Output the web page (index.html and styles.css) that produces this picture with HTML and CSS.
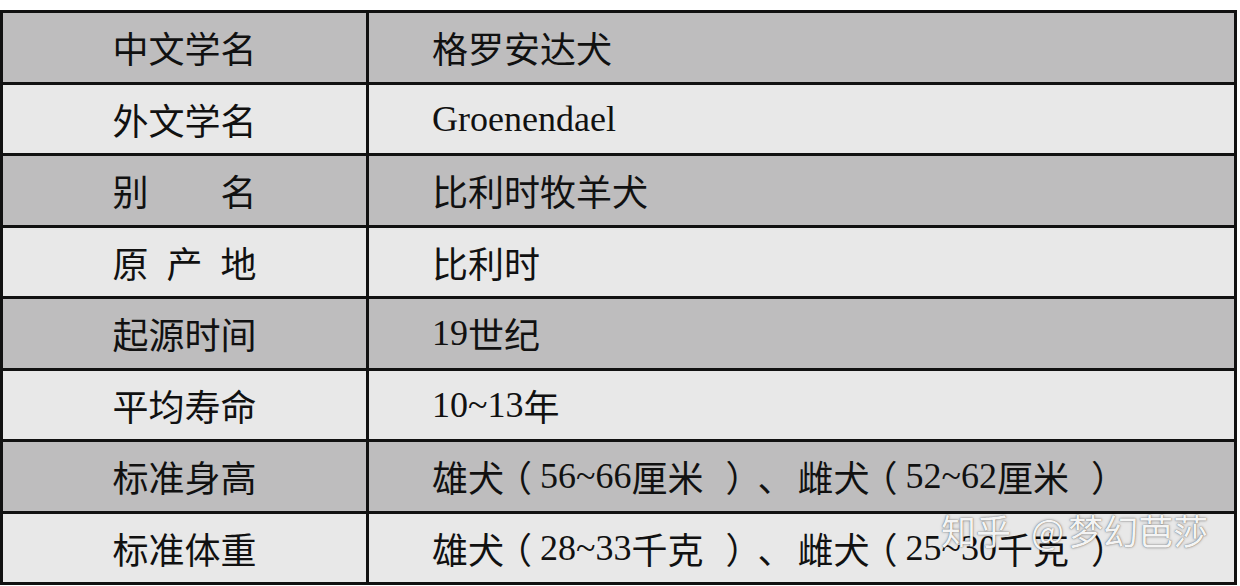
FILE: index.html
```html
<!DOCTYPE html>
<html lang="zh-CN">
<head>
<meta charset="utf-8">
<title>格罗安达犬</title>
<link rel="stylesheet" href="styles.css">
</head>
<body>
<div class="sheet">
  <div class="row dark"><div class="k"><span class="lbl">中文学名</span></div><div class="v">格罗安达犬</div></div>
  <div class="row light"><div class="k"><span class="lbl">外文学名</span></div><div class="v"><span class="n">Groenendael</span></div></div>
  <div class="row dark"><div class="k"><span class="lbl">别 名</span></div><div class="v">比利时牧羊犬</div></div>
  <div class="row light"><div class="k"><span class="lbl">原 产 地</span></div><div class="v">比利时</div></div>
  <div class="row dark"><div class="k"><span class="lbl">起源时间</span></div><div class="v"><span class="n">19</span>世纪</div></div>
  <div class="row light"><div class="k"><span class="lbl">平均寿命</span></div><div class="v"><span class="n">10~13</span>年</div></div>
  <div class="row dark"><div class="k"><span class="lbl">标准身高</span></div><div class="v">雄犬<span class="po">（</span><span class="n">56~66</span>厘米<span class="pc">）</span><span class="dn">、</span>雌犬<span class="po">（</span><span class="n">52~62</span>厘米<span class="pc">）</span></div></div>
  <div class="row light"><div class="k"><span class="lbl">标准体重</span></div><div class="v">雄犬<span class="po">（</span><span class="n">28~33</span>千克<span class="pc">）</span><span class="dn">、</span>雌犬<span class="po">（</span><span class="n">25~30</span>千克<span class="pc">）</span></div></div>
</div>
<div class="wm"><span class="wm-a">知乎</span><span class="wm-at">@</span><span>梦幻芭莎</span></div>
</body>
</html>
```
FILE: styles.css
```css
html, body {
  margin: 0;
  padding: 0;
  background: #ffffff;
}
body {
  width: 1240px;
  height: 586px;
  overflow: hidden;
  position: relative;
  padding-top: 10px;
  box-sizing: border-box;
}
.sheet {
  width: 1237px;
  box-sizing: border-box;
  background: #111111;
  padding: 3px;
  display: flex;
  flex-direction: column;
  gap: 3px;
}
.row {
  display: grid;
  grid-template-columns: 363px 1fr;
  column-gap: 3px;
  height: 68.5px;
}
.row.dark .k, .row.dark .v { background: #bebdbe; }
.row.light .k, .row.light .v { background: #e8e8e8; }
.k {
  display: flex;
  align-items: center;
  justify-content: center;
  font-family: "Noto Sans CJK SC", sans-serif;
  font-weight: 400;
  font-size: 36px;
  color: #111;
}
.lbl {
  display: block;
  width: 144px;
  line-height: 36px;
  text-align: justify;
  text-align-last: justify;
  white-space: nowrap;
}
.v {
  display: flex;
  align-items: center;
  padding-left: 63px;
  font-family: "Noto Sans CJK SC", sans-serif;
  font-weight: 400;
  font-size: 36px;
  color: #111;
  white-space: pre;
}
.n {
  font-family: "Liberation Serif", serif;
  font-weight: 400;
}
.po {
  margin-left: -8px;
  margin-right: 8px;
}
.pc {
  margin-left: 22px;
  margin-right: -4px;
}
.dn {
  margin-right: 4px;
}
.wm {
  position: absolute;
  left: 941px;
  top: 512px;
  display: flex;
  font-family: "Noto Sans CJK SC", sans-serif;
  font-size: 35px;
  line-height: 35px;
  color: rgba(255, 255, 255, 0.95);
  text-shadow: 0 0 1px rgba(0, 0, 0, 0.55), 0 0 3px rgba(0, 0, 0, 0.35);
  white-space: nowrap;
}
.wm-at {
  margin-left: 20px;
  margin-right: 4px;
}
```
